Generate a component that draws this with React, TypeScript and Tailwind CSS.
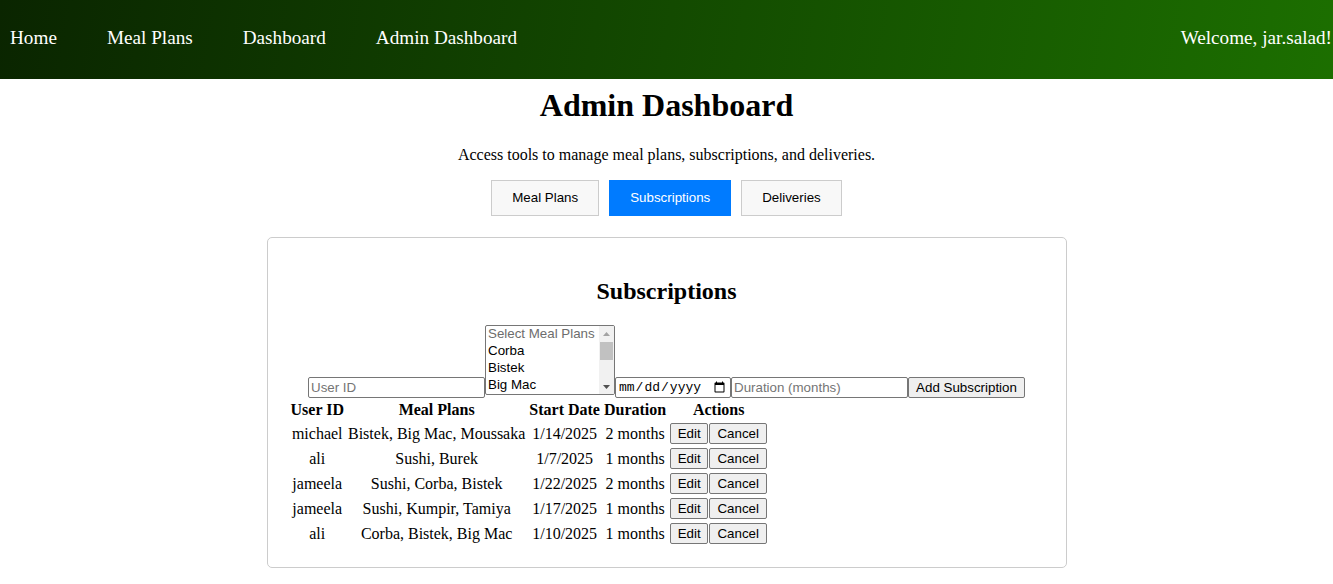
import React from 'react';

const serif = { fontFamily: '"Liberation Serif", "Times New Roman", serif' };

const rows = [
  { user: 'michael', plans: 'Bistek, Big Mac, Moussaka', start: '1/14/2025', duration: '2 months' },
  { user: 'ali', plans: 'Sushi, Burek', start: '1/7/2025', duration: '1 months' },
  { user: 'jameela', plans: 'Sushi, Corba, Bistek', start: '1/22/2025', duration: '2 months' },
  { user: 'jameela', plans: 'Sushi, Kumpir, Tamiya', start: '1/17/2025', duration: '1 months' },
  { user: 'ali', plans: 'Corba, Bistek, Big Mac', start: '1/10/2025', duration: '1 months' },
];

const mealOptions = ['Corba', 'Bistek', 'Big Mac'];

const inputCls =
  "h-[21px] border border-[#767676] rounded-[2px] px-[2px] bg-white text-[13.33px] font-['Liberation_Sans',Arial,sans-serif] text-black placeholder:text-[#757575] outline-none";

const smallBtn =
  "block h-[21px] border border-[#767676] rounded-[2px] bg-[#efefef] px-[6px] text-[13.33px] leading-[19px] font-['Liberation_Sans',Arial,sans-serif] text-black";

const tabBtn = "h-[36px] px-[20px] border text-[13.33px]";

// fake multi-select list box, the native one hides its scrollbar in headless mode
const MealPlanList: React.FC = () => (
  <div className="flex w-[130px] h-[70px] mb-[3px] border border-[#767676] rounded-[2px] bg-white overflow-hidden text-left text-[13.33px] leading-[17px] font-['Liberation_Sans',Arial,sans-serif]">
    <div className="flex-1 flex flex-col -mt-[1px]">
      <div className="px-[2px] text-[#6d6d6d]">Select Meal Plans</div>
      {mealOptions.map((m) => (
        <div key={m} className="px-[2px] text-black">{m}</div>
      ))}
    </div>
    <div className="w-[15px] flex flex-col items-center bg-[#f1f1f1]">
      <div className="h-[15px] w-full flex items-center justify-center">
        <svg width="7" height="4" viewBox="0 0 7 4"><path d="M0 4 L3.5 0 L7 4 Z" fill="#a3a3a3" /></svg>
      </div>
      <div className="w-[13px] h-[18px] mt-[1px] bg-[#c1c1c1]" />
      <div className="flex-1" />
      <div className="h-[15px] w-full flex items-center justify-center">
        <svg width="7" height="4" viewBox="0 0 7 4"><path d="M0 0 L3.5 4 L7 0 Z" fill="#505050" /></svg>
      </div>
    </div>
  </div>
);

const App: React.FC = () => {
  return (
    <div className="min-h-screen bg-white text-black text-[16px]" style={serif}>
      <nav className="h-[79px] flex items-center justify-between pl-[10px] pr-[1px] pb-[2px] bg-[linear-gradient(100deg,#0a2500,#1c6f00)] text-white text-[19.2px]">
        <div className="flex gap-[50px]">
          <a>Home</a>
          <a>Meal Plans</a>
          <a>Dashboard</a>
          <a>Admin Dashboard</a>
        </div>
        <span>Welcome, jar.salad!</span>
      </nav>

      <div className="text-center">
        <h1 className="mt-[9px] mb-[22px] text-[32px] font-bold leading-[35px]">Admin Dashboard</h1>
        <p className="mb-[16px] leading-[19px]">Access tools to manage meal plans, subscriptions, and deliveries.</p>

        <div className="flex justify-center gap-[10px] mb-[21px] font-['Liberation_Sans',Arial,sans-serif]">
          <button className={`${tabBtn} border-[#ccc] bg-[#f8f8f8] text-black`}>Meal Plans</button>
          <button className={`${tabBtn} border-[#007bff] bg-[#007bff] text-white`}>Subscriptions</button>
          <button className={`${tabBtn} border-[#ccc] bg-[#f8f8f8] text-black`}>Deliveries</button>
        </div>

        <div className="mx-auto w-[800px] border border-[#ccc] rounded-[5px] p-[20px] mb-[16px]">
          <h2 className="mt-[19px] mb-[20px] text-[24px] font-bold leading-[28px]">Subscriptions</h2>

          <div className="flex justify-center items-end">
            <input className={`${inputCls} w-[177px]`} placeholder="User ID" />
            <MealPlanList />
            <input
              type="date"
              className="h-[21px] w-[116px] border border-[#767676] rounded-[2px] px-[2px] bg-white text-[13px] font-['Liberation_Mono',monospace] text-black outline-none"
            />
            <input className={`${inputCls} w-[177px]`} placeholder="Duration (months)" />
            <button className={`${smallBtn} w-[117px] px-0`}>Add Subscription</button>
          </div>

          <table className="border-separate border-spacing-[2px]">
            <thead>
              <tr>
                <th className="p-[1px] font-bold leading-[18px]">User ID</th>
                <th className="p-[1px] font-bold leading-[18px]">Meal Plans</th>
                <th className="p-[1px] font-bold leading-[18px]">Start Date</th>
                <th className="p-[1px] font-bold leading-[18px]">Duration</th>
                <th className="p-[1px] font-bold leading-[18px]">Actions</th>
              </tr>
            </thead>
            <tbody>
              {rows.map((r, i) => (
                <tr key={i}>
                  <td className="p-[1px] h-[23px] leading-[18px] text-center align-middle">{r.user}</td>
                  <td className="p-[1px] h-[23px] leading-[18px] text-center align-middle">{r.plans}</td>
                  <td className="p-[1px] h-[23px] leading-[18px] text-center align-middle">{r.start}</td>
                  <td className="p-[1px] h-[23px] leading-[18px] text-center align-middle">{r.duration}</td>
                  <td className="p-[1px] h-[23px] leading-none align-middle">
                    <div className="flex justify-center gap-[1px]">
                      <button className={`${smallBtn} w-[38px] px-0`}>Edit</button>
                      <button className={`${smallBtn} w-[58px] px-0`}>Cancel</button>
                    </div>
                  </td>
                </tr>
              ))}
            </tbody>
          </table>
        </div>
      </div>
    </div>
  );
};

export default App;
